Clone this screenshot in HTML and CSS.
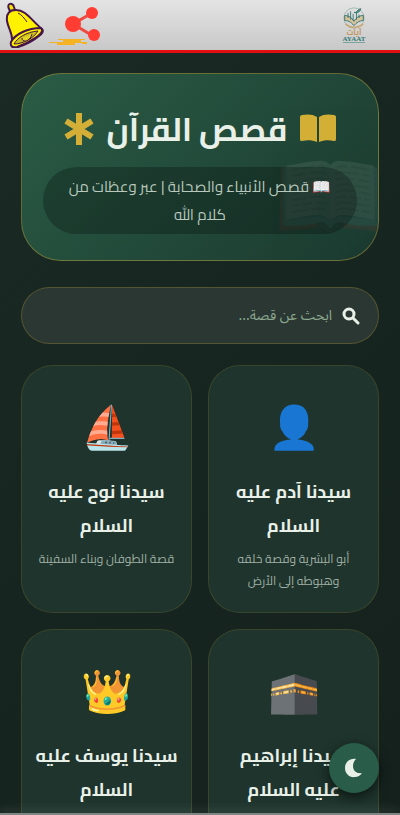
FILE: index.html
```html
<!DOCTYPE html>
<html lang="ar" dir="rtl">
<head>
    <meta charset="UTF-8">
    <meta name="viewport" content="width=device-width, initial-scale=1.0">
    <title>قصص القرآن</title>
    <link rel="stylesheet" href="styles.css">
</head>
<body>
    <nav class="topbar">
        <a class="logo" href="#" aria-label="AYAAT">
            <svg width="24" height="22" viewBox="0 0 28 26">
                <circle cx="14" cy="13" r="12" fill="none" stroke="#9ab5ae" stroke-width="1"/>
                <path d="M14 22C10 17 6 16 3 16v-6c5 0 9 3 11 7 2-4 6-7 11-7v6c-4 0-8 2-11 6z" fill="#d7c49c" stroke="#246b67"/>
                <path d="M7 13V7M10 15V5M13 16V8M17 15V6M20 13V9M14 6c2 3 4-4 8-4-1 4-4 6-8 4z" fill="#59918a" stroke="#2c716c"/>
                <path d="M4 20c3 3 6 4 10 4s8-1 11-4" fill="none" stroke="#c8a978" stroke-width="2"/>
            </svg>
            <span class="logo-ar">آيات</span>
            <span class="logo-en">AYAAT</span>
            <span class="logo-line"></span>
        </a>
        <div class="actions">
            <button class="share" aria-label="مشاركة">
                <svg width="54" height="44" viewBox="0 0 54 44">
                    <path d="M10 34h27v1h-4v2h6v1H27v2H9v-2H1v-1h14v-2h-5zM34 38h5v1h-5z" fill="#f5b324"/>
                    <path d="M44 8 25 19l20 12" fill="none" stroke="#f0493f" stroke-width="3"/>
                    <circle cx="25" cy="19" r="8" fill="#ff3d32"/>
                    <circle cx="44" cy="8" r="6" fill="#ff3d32"/>
                    <circle cx="46" cy="30" r="6" fill="#ff3d32"/>
                </svg>
            </button>
            <button class="bell" aria-label="الإشعارات">
                <svg width="40" height="46" viewBox="0 0 40 46" stroke="#46164b" stroke-width="2" stroke-linejoin="round">
                    <path d="M5 7c-3-6 4-7 5-2l1 3-5 1z" fill="#f3e500"/>
                    <path d="M3 19C2 11 6 8 12 8c10 0 15 10 26 19 2 2 0 5-3 7-6 5-14 9-21 11-5 1-7-2-6-6 1-7-4-13-5-20z" fill="#fff200"/>
                    <path d="M7 40c4-8 17-14 30-14 3 3-1 7-6 10-6 4-12 7-18 9-5 1-7-1-6-5z" fill="#fff200"/>
                    <path d="M10 42c3-6 12-12 24-13-4 7-15 13-24 13z" fill="#c9bd1c" stroke-width="1"/>
                    <path d="M18 36c0 5 8 4 10-4" fill="#e3d821" stroke-width="1"/>
                    <path d="M14 11c4 2 6 5 9 9" fill="none" stroke-width="1"/>
                </svg>
            </button>
        </div>
    </nav>

    <main class="container">
        <header class="hero">
            <span class="hero-mark">📖</span>
            <h1>
                <svg width="36" height="32" viewBox="0 0 36 32" fill="#d4af37">
                    <path d="M17 4C13 1 7 1 2 2 1 2 0 3 0 4v22c0 2 1 2 2 2 5-1 10-1 15 1zM19 4c4-3 10-3 15-2 1 0 2 1 2 2v22c0 2-1 2-2 2-5-1-10-1-15 1z"/>
                </svg>
                <span>قصص القرآن</span>
                <svg width="30" height="34" viewBox="0 0 30 34" stroke="#d4af37" stroke-width="6">
                    <path d="M15 1v32M2 9l26 16M28 9 2 25"/>
                </svg>
            </h1>
            <p class="subtitle">📖 قصص الأنبياء والصحابة | عبر وعظات من كلام الله</p>
        </header>

        <label class="search">
            <svg width="18" height="18" viewBox="0 0 18 18" fill="none" stroke="#e8f0e8" stroke-width="3" stroke-linecap="round">
                <circle cx="7" cy="7" r="5"/>
                <path d="m11 11 5 5"/>
            </svg>
            <input type="search" placeholder="ابحث عن قصة..." aria-label="ابحث عن قصة">
        </label>

        <section class="stories">
            <article class="card">
                <div class="card-icon">👤</div>
                <h2>سيدنا آدم عليه السلام</h2>
                <p>أبو البشرية وقصة خلقه وهبوطه إلى الأرض</p>
            </article>
            <article class="card">
                <div class="card-icon">⛵</div>
                <h2>سيدنا نوح عليه السلام</h2>
                <p>قصة الطوفان وبناء السفينة</p>
            </article>
            <article class="card">
                <div class="card-icon">🕋</div>
                <h2>سيدنا إبراهيم عليه السلام</h2>
            </article>
            <article class="card">
                <div class="card-icon">👑</div>
                <h2>سيدنا يوسف عليه السلام</h2>
            </article>
        </section>
    </main>

    <button class="theme-toggle" aria-label="الوضع الليلي">
        <svg width="20" height="20" viewBox="0 0 20 20" fill="#e8f0e8">
            <path d="M12 1C6 0 1 4 1 10s5 10 10 9c3 0 6-2 7-4-5 1-9-2-9-7 0-3 1-5 3-7z"/>
        </svg>
    </button>
    <div class="bottom-line"></div>
</body>
</html>
```
FILE: styles.css
```css
* {
    margin: 0;
    padding: 0;
    box-sizing: border-box;
}

body {
    min-height: 100vh;
    background: linear-gradient(135deg, #1a2a24, #14201c);
    font-family: Cairo, "Noto Sans Arabic", "DejaVu Sans", sans-serif;
    color: #e8f0e8;
    overflow: hidden;
}

button {
    border: none;
    background: none;
    cursor: pointer;
}

svg {
    display: block;
    flex-shrink: 0;
}

.topbar {
    display: flex;
    justify-content: space-between;
    height: 53px;
    padding: 0 32px 0 4px;
    background: linear-gradient(#e4e4e4, #c8c8c8);
    border-bottom: 3px solid #e01010;
}

.logo {
    display: flex;
    flex-direction: column;
    align-items: center;
    width: 28px;
    padding-top: 7px;
    text-decoration: none;
}

.logo-ar {
    font-size: 8px;
    font-weight: bold;
    line-height: 7px;
    color: #c39a66;
}

.logo-en {
    font: bold 7px/6px "Liberation Serif", serif;
    color: #317873;
}

.logo-line {
    width: 22px;
    height: 1px;
    background: #7ba29e;
}

.actions {
    display: flex;
    gap: 4px;
}

.share {
    padding-top: 4px;
}

.container {
    padding: 20px 21px;
}

.hero {
    position: relative;
    overflow: hidden;
    padding: 26px 21px;
    border: 1px solid rgba(212, 175, 55, 0.4);
    border-radius: 40px;
    background: linear-gradient(135deg, #2a5c45, #1b3a30);
    text-align: center;
}

.hero-mark {
    position: absolute;
    right: -10px;
    bottom: 12px;
    font-size: 92px;
    line-height: 106px;
    opacity: 0.08;
}

.hero h1 {
    display: flex;
    justify-content: center;
    align-items: center;
    gap: 13px;
    margin-bottom: 9px;
    font-size: 32px;
    line-height: 58px;
}

.subtitle {
    position: relative;
    padding: 6px 21px 5px;
    border-radius: 40px;
    background: rgba(0, 0, 0, 0.25);
    color: #b8c8bd;
    font-size: 15px;
    line-height: 28px;
}

.search {
    display: flex;
    align-items: center;
    gap: 10px;
    height: 57px;
    margin: 26px 0 21px;
    padding: 0 18px;
    border: 1px solid rgba(212, 175, 55, 0.25);
    border-radius: 40px;
    background: #2a3732;
}

.search input {
    flex: 1;
    min-width: 0;
    border: none;
    outline: none;
    background: none;
    color: #e8f0e8;
    font: 14px "Noto Sans Arabic", "DejaVu Sans", sans-serif;
}

.search input::placeholder {
    color: #8aa88f;
}

.stories {
    display: grid;
    grid-template-columns: 1fr 1fr;
    gap: 16px;
}

.card {
    min-height: 248px;
    padding: 25px 12px 20px;
    border: 1px solid rgba(212, 175, 55, 0.15);
    border-radius: 32px;
    background: #1e342c;
    text-align: center;
}

.card-icon {
    margin-bottom: 12px;
    font-size: 42px;
    line-height: 72px;
}

.card h2 {
    margin-bottom: 5px;
    font-size: 18px;
    line-height: 34px;
}

.card p {
    color: #a0b0a6;
    font-size: 12px;
    line-height: 22px;
}

.theme-toggle {
    position: fixed;
    right: 21px;
    bottom: 22px;
    display: flex;
    justify-content: center;
    align-items: center;
    width: 50px;
    height: 50px;
    border-radius: 50%;
    background: #2a5c4a;
    box-shadow: 0 4px 12px rgba(0, 0, 0, 0.6);
}

.bottom-line {
    position: fixed;
    right: 0;
    bottom: 0;
    left: 0;
    height: 2px;
    background: #7f8683;
    box-shadow: 0 -2px 10px rgba(255, 255, 255, 0.3);
}
```
